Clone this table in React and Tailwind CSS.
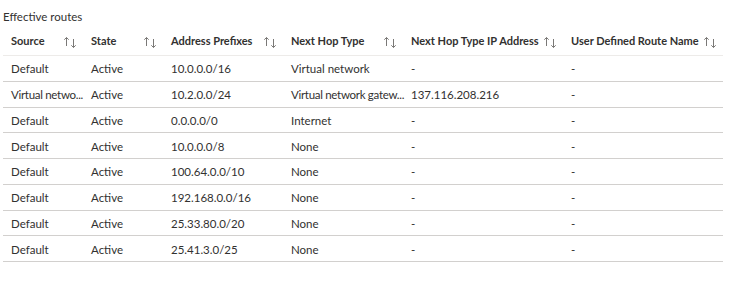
import React from "react";

const cols = [
  { label: "Source", w: "w-[80px]" },
  { label: "State", w: "w-[80px]" },
  { label: "Address Prefixes", w: "w-[120px]" },
  { label: "Next Hop Type", w: "w-[120px]" },
  { label: "Next Hop Type IP Address", w: "w-[160px]" },
  { label: "User Defined Route Name", w: "w-[160px]" },
];

const rows = [
  ["Default", "Active", "10.0.0.0/16", "Virtual network", "-", "-"],
  ["Virtual netwo...", "Active", "10.2.0.0/24", "Virtual network gatew...", "137.116.208.216", "-"],
  ["Default", "Active", "0.0.0.0/0", "Internet", "-", "-"],
  ["Default", "Active", "10.0.0.0/8", "None", "-", "-"],
  ["Default", "Active", "100.64.0.0/10", "None", "-", "-"],
  ["Default", "Active", "192.168.0.0/16", "None", "-", "-"],
  ["Default", "Active", "25.33.80.0/20", "None", "-", "-"],
  ["Default", "Active", "25.41.3.0/25", "None", "-", "-"],
];

function SortIcon() {
  return (
    <svg width="14" height="14" viewBox="0 0 14 14" fill="none" stroke="#7a7876" strokeWidth="1" className="shrink-0">
      <path d="M3.5 11V2.5M1.3 4.7L3.5 2.5L5.7 4.7" />
      <path d="M10.5 4V12.5M8.3 10.3L10.5 12.5L12.7 10.3" />
    </svg>
  );
}

export default function App() {
  return (
    <div
      className="w-[755px] h-[281px] bg-white text-[#323130] px-[3px] pt-[8px]"
      style={{ fontFamily: 'Lato, "Noto Sans", sans-serif' }}
    >
      <div className="text-[11.5px] leading-[18px] h-[18px]">Effective routes</div>
      <div className="w-[720px] mt-[2px]">
        <div className="flex h-[28px] items-center border-b border-[#edebe9]">
          {cols.map((c) => (
            <div key={c.label} className={`${c.w} flex items-center justify-between pl-[8px] pr-[6px] text-[11px] font-bold whitespace-nowrap`}>
              <span>{c.label}</span>
              <SortIcon />
            </div>
          ))}
        </div>
        {rows.map((r, i) => (
          <div key={i} className="flex h-[25.75px] items-center border-b border-[#d2d0ce] pt-[1px]">
            {r.map((v, j) => (
              <div
                key={j}
                className={`${cols[j].w} shrink-0 pl-[8px] text-[11.5px] whitespace-nowrap ${v.endsWith("...") ? "tracking-[-0.3px]" : ""}`}
              >
                {v}
              </div>
            ))}
          </div>
        ))}
      </div>
    </div>
  );
}
